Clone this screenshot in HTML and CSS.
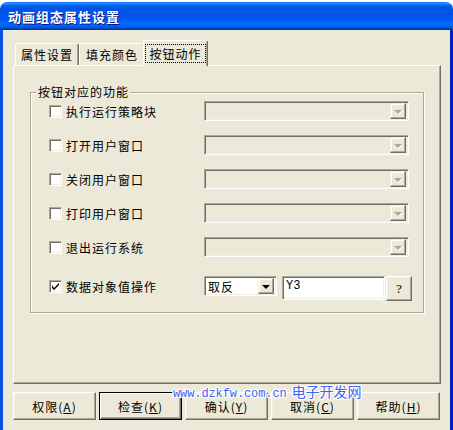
FILE: index.html
```html
<!DOCTYPE html>
<html lang="zh-CN">
<head>
    <meta charset="UTF-8">
    <meta name="viewport" content="width=device-width, initial-scale=1.0">
    <title>动画组态属性设置</title>
    <link rel="stylesheet" href="styles.css">
</head>
<body>
    <div class="ventana">
        <div class="titulo">动画组态属性设置</div>
        <div class="marco">
            <div class="pestanas">
                <div class="pestana primera">属性设置</div>
                <div class="pestana segunda">填充颜色</div>
                <div class="pestana activa"><span class="foco">按钮动作</span></div>
            </div>
            <div class="pagina">
                <fieldset class="grupo">
                    <legend>按钮对应的功能</legend>
                    <div class="filas">
                        <div class="fila">
                            <label class="opcion"><span class="casilla"></span>执行运行策略块</label>
                            <div class="combo"><span class="flecha-btn"><span class="flecha"></span></span></div>
                        </div>
                        <div class="fila">
                            <label class="opcion"><span class="casilla"></span>打开用户窗口</label>
                            <div class="combo"><span class="flecha-btn"><span class="flecha"></span></span></div>
                        </div>
                        <div class="fila">
                            <label class="opcion"><span class="casilla"></span>关闭用户窗口</label>
                            <div class="combo"><span class="flecha-btn"><span class="flecha"></span></span></div>
                        </div>
                        <div class="fila">
                            <label class="opcion"><span class="casilla"></span>打印用户窗口</label>
                            <div class="combo"><span class="flecha-btn"><span class="flecha"></span></span></div>
                        </div>
                        <div class="fila">
                            <label class="opcion"><span class="casilla"></span>退出运行系统</label>
                            <div class="combo"><span class="flecha-btn"><span class="flecha"></span></span></div>
                        </div>
                        <div class="fila ultima">
                            <label class="opcion">
                                <span class="casilla">
                                    <svg width="7" height="7" viewBox="0 0 7 7"><path d="M0 2v3l2 2 5-5V0L2 5z" fill="#000"/></svg>
                                </span>数据对象值操作
                            </label>
                            <div class="combo corto"><span class="valor">取反</span><span class="flecha-btn"><span class="flecha negra"></span></span></div>
                            <div class="campo">Y3</div>
                            <button type="button" class="boton pregunta">?</button>
                        </div>
                    </div>
                </fieldset>
            </div>
            <div class="botones">
                <button type="button" class="boton">权限(<u>A</u>)</button>
                <button type="button" class="boton defecto">检查(<u>K</u>)</button>
                <button type="button" class="boton">确认(<u>Y</u>)</button>
                <button type="button" class="boton">取消(<u>C</u>)</button>
                <button type="button" class="boton">帮助(<u>H</u>)</button>
            </div>
        </div>
        <div class="marca"><span class="url">www.dzkfw.com.cn</span><span class="nombre">电子开发网</span></div>
    </div>
</body>
</html>
```

FILE: styles.css
```css
*{
    box-sizing: border-box;
}
body{
    margin: 0;
    background-color: white;
    font-family: "Noto Sans CJK SC", sans-serif;
    font-size: 12px;
    color: black;
}
.ventana{
    position: relative;
    margin-top: 2px;
    width: 453px;
    height: 428px;
    display: flex;
    flex-direction: column;
}
.titulo{
    height: 28px;
    padding-left: 8px;
    display: flex;
    align-items: center;
    border-radius: 7px 7px 0 0;
    background: linear-gradient(180deg, #0058ee 0%, #3593ff 4%, #288eff 6%, #127dff 8%, #036ffc 10%, #0262ee 14%, #0057e5 20%, #0054e3 24%, #0055eb 56%, #005bf5 66%, #026afe 76%, #0062ef 86%, #0052d6 92%, #0040ab 96%, #003092 100%);
    color: white;
    font-size: 13px;
    font-weight: bold;
    letter-spacing: 1px;
    text-shadow: 1px 1px #0a1883;
}
.marco{
    flex: 1;
    background-color: #ece9d8;
    border-left: 3px solid #0a4fe0;
    border-right: 3px solid #0022b8;
    padding: 10px 9px 0 10px;
}
.pestanas{
    height: 25px;
    padding-left: 2px;
    display: flex;
    align-items: flex-end;
}
.pestana{
    height: 22px;
    display: flex;
    align-items: center;
    justify-content: center;
    border: 1px solid;
    border-bottom: none;
    border-color: #fff #716f64 transparent #fff;
    border-radius: 3px 3px 0 0;
    box-shadow: inset -1px 0 #aca899;
    letter-spacing: 1px;
    background-color: #ece9d8;
}
.primera{
    width: 64px;
}
.segunda{
    width: 66px;
}
.activa{
    position: relative;
    z-index: 1;
    width: 65px;
    height: 26px;
    margin-left: -2px;
    margin-bottom: -1px;
    padding-bottom: 1px;
}
.foco{
    width: 61px;
    height: 19px;
    display: flex;
    align-items: center;
    justify-content: center;
    border: 1px dotted #000;
}
.pagina{
    height: 319px;
    border: 1px solid;
    border-color: #fff #716f64 #716f64 #fff;
    box-shadow: inset -1px -1px #aca899;
    padding: 19px 0 0 16px;
}
.grupo{
    margin: 0;
    width: 391px;
    border: 1px solid #aca899;
    box-shadow: inset 1px 1px #fff, 1px 1px #fff;
    padding: 2px 11px 11px 0;
}
.grupo legend{
    margin-left: 5px;
    padding: 0 2px;
    line-height: 14px;
    letter-spacing: 1px;
    background-color: #ece9d8;
}
.filas{
    display: flex;
    flex-direction: column;
    gap: 14px;
}
.fila{
    height: 20px;
    padding-left: 18px;
    display: flex;
    align-items: center;
}
.ultima{
    height: 25px;
    margin-top: 5px;
    align-items: flex-start;
}
.opcion{
    width: 155px;
    height: 20px;
    display: flex;
    align-items: center;
    gap: 4px;
    letter-spacing: 1px;
}
.casilla{
    width: 13px;
    height: 13px;
    display: flex;
    align-items: center;
    justify-content: center;
    border: 1px solid;
    border-color: #aca899 #fff #fff #aca899;
    box-shadow: inset 1px 1px #716f64, inset -1px -1px #f1efe2;
    background-color: white;
}
.combo{
    width: 205px;
    height: 20px;
    padding: 2px;
    display: flex;
    align-items: center;
    justify-content: flex-end;
    border: 1px solid;
    border-color: #aca899 #fff #fff #aca899;
    box-shadow: inset 1px 1px #716f64, inset -1px -1px #f1efe2;
    background-color: #ece9d8;
}
.corto{
    width: 73px;
    justify-content: space-between;
    background-color: white;
}
.valor{
    padding-left: 1px;
    letter-spacing: 1px;
}
.flecha-btn{
    width: 16px;
    height: 16px;
    display: flex;
    align-items: center;
    justify-content: center;
    border: 1px solid;
    border-color: #f1efe2 #716f64 #716f64 #f1efe2;
    box-shadow: inset -1px -1px #aca899, inset 1px 1px #fff;
    background-color: #ece9d8;
}
.flecha{
    width: 0;
    height: 0;
    margin-top: 1px;
    border-left: 4px solid transparent;
    border-right: 4px solid transparent;
    border-top: 4px solid #aca899;
    filter: drop-shadow(1px 1px 0 #fff);
}
.negra{
    border-top-color: black;
    filter: none;
}
.campo{
    width: 103px;
    height: 24px;
    margin-left: 5px;
    padding: 2px 3px;
    border: 1px solid;
    border-color: #aca899 #fff #fff #aca899;
    box-shadow: inset 1px 1px #716f64, inset -1px -1px #f1efe2;
    background-color: white;
    font-family: "Liberation Mono", monospace;
    font-size: 12px;
    line-height: 14px;
}
.boton{
    height: 28px;
    width: 83px;
    padding: 0;
    border: 1px solid;
    border-color: #fff #716f64 #716f64 #fff;
    box-shadow: inset -1px -1px #aca899, inset 1px 1px #f1efe2;
    background-color: #ece9d8;
    font-family: "Noto Sans CJK SC", sans-serif;
    font-size: 12px;
    letter-spacing: 1px;
    color: black;
}
.pregunta{
    width: 26px;
    height: 25px;
    margin-left: 1px;
    letter-spacing: 0;
    font-family: "Liberation Serif", serif;
    font-size: 13px;
}
.defecto{
    border-color: #000;
    box-shadow: inset 1px 1px #fff, inset -1px -1px #716f64, inset -2px -2px #aca899;
}
.botones{
    margin-top: 8px;
    display: flex;
    gap: 3px;
}
.marca{
    position: absolute;
    left: 173px;
    top: 379px;
    color: #3f62f2;
    font-size: 14px;
    white-space: nowrap;
    text-shadow: 1px 0 #fff, -1px 0 #fff, 0 1px #fff, 0 -1px #fff, 1px 1px #fff, -1px -1px #fff, 1px -1px #fff, -1px 1px #fff;
}
.url{
    font-family: "Liberation Mono", monospace;
    font-size: 12px;
    letter-spacing: -0.1px;
}
.nombre{
    margin-left: 5px;
}
```
